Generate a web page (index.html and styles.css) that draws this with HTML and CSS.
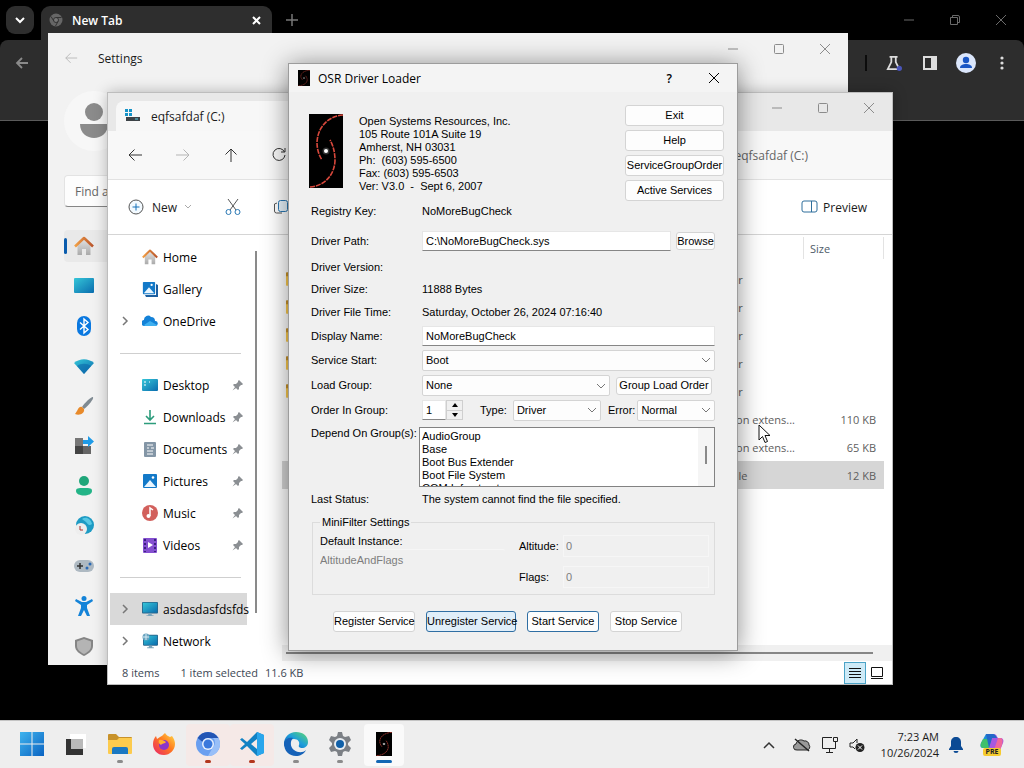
FILE: index.html
```html
<!DOCTYPE html>
<html lang="en">
<head>
    <meta charset="UTF-8">
    <meta name="viewport" content="width=device-width, initial-scale=1.0">
    <title>OSR Driver Loader</title>
    <link rel="stylesheet" href="styles.css">
</head>
<body>
    <!-- shared icons -->
    <svg class="defs" width="0" height="0" aria-hidden="true">
        <defs>
            <linearGradient id="teal" x1="0" y1="0" x2="1" y2="1"><stop offset="0" stop-color="#35c6d8"/><stop offset="1" stop-color="#0a6cae"/></linearGradient>
            <linearGradient id="blue" x1="0" y1="0" x2="1" y2="1"><stop offset="0" stop-color="#3fb4ee"/><stop offset="1" stop-color="#0a63c2"/></linearGradient>
            <linearGradient id="wall" x1="0" y1="0" x2="0" y2="1"><stop offset="0" stop-color="#e2e2e2"/><stop offset="1" stop-color="#aaa"/></linearGradient>
            <linearGradient id="roof" x1="0" y1="0" x2="1" y2="0"><stop offset="0" stop-color="#f2a046"/><stop offset="1" stop-color="#b9552c"/></linearGradient>
            <linearGradient id="fire" x1="1" y1="0" x2="0" y2="1"><stop offset="0" stop-color="#ffe04a"/><stop offset=".45" stop-color="#ff7a1f"/><stop offset="1" stop-color="#e8206c"/></linearGradient>
            <linearGradient id="edge" x1="0" y1="1" x2="1" y2="0"><stop offset="0" stop-color="#0c4fa8"/><stop offset=".5" stop-color="#1d9ddc"/><stop offset="1" stop-color="#5fdc6c"/></linearGradient>
        </defs>
        <symbol id="min" viewBox="0 0 12 12"><path d="M1 6h10" stroke="currentColor" fill="none"/></symbol>
        <symbol id="max" viewBox="0 0 12 12"><rect x="1.500" y="1.500" width="9" height="9" rx="1" stroke="currentColor" fill="none"/></symbol>
        <symbol id="close" viewBox="0 0 12 12"><path d="M1 1l10 10M11 1L1 11" stroke="currentColor" fill="none"/></symbol>
        <symbol id="arrow" viewBox="0 0 16 16"><path d="M15 8H2M7.500 2.500L2 8l5.500 5.500" stroke="currentColor" fill="none"/></symbol>
        <symbol id="chev" viewBox="0 0 8 12"><path d="M2 2l4 4-4 4" stroke="#777" stroke-width="1.500" fill="none"/></symbol>
        <symbol id="pin" viewBox="0 0 12 12"><path d="M7 1l4 4-1 1-1 0-2 2 0 2-1 1L1 6l1-1h2l2-2V2z M3 8L0.500 11.500 4 9z" fill="#8b8f93"/></symbol>
        <symbol id="house" viewBox="0 0 20 20"><path d="M3.500 9L10 3l6.500 6v10H12v-6H8v6H3.500z" fill="url(#wall)"/><path d="M1 10.500L10 2l9 8.500" stroke="url(#roof)" stroke-width="2.600" fill="none" stroke-linejoin="round"/></symbol>
        <symbol id="picture" viewBox="0 0 16 16"><rect x="1" y="1" width="14" height="14" rx="1" fill="#1379c8"/><path d="M2 14l6-7 6 7z" fill="#e9f6ff"/><circle cx="11" cy="4.500" r="1.300" fill="#fff"/></symbol>
        <symbol id="galaxy" viewBox="0 0 34 74" preserveAspectRatio="none"><rect width="34" height="74" fill="#000"/><path d="M34 1C20 2 9 12 8 28c0 8 2 13 5 18" stroke="#d8483c" stroke-width="1.600" stroke-dasharray="5 1" fill="none"/><path d="M1 73c13-1 24-10 25-26 0-9-2-16-5-21" stroke="#d8483c" stroke-width="1.600" stroke-dasharray="5 1" fill="none"/><circle cx="17" cy="37" r="2" fill="#fff"/><circle cx="17" cy="37" r="3.500" fill="#fff" opacity=".2"/></symbol>
        <symbol id="screen" viewBox="0 0 18 18"><rect x="0" y="1" width="18" height="13" rx="1" fill="#28668c"/><rect x="1" y="2" width="16" height="11" fill="url(#teal)"/><path d="M7 14h4v2h2v1H5v-1h2z" fill="#7ba4ba"/></symbol>
        <symbol id="folder" viewBox="0 0 24 22"><path d="M0 2a1 1 0 011-1h7l3 3h12a1 1 0 011 1v15H0z" fill="#c8922a"/><path d="M0 7h9l2-2h13v15a1 1 0 01-1 1H1a1 1 0 01-1-1z" fill="#fccb4e"/></symbol>
    </svg>

    <main class="desktop">
        <section class="browser" aria-label="Browser">
            <div class="tab-strip">
                <button class="tab-search" aria-label="Search tabs"><svg width="12" height="12" viewBox="0 0 12 12"><path d="M2 4l4 4 4-4" stroke="#fff" stroke-width="2" fill="none"/></svg></button>
                <div class="browser-tab">
                    <svg width="14" height="14" viewBox="0 0 14 14"><circle cx="7" cy="7" r="6.500" fill="#666"/><circle cx="7" cy="7" r="2.500" fill="#777" stroke="#333"/><path d="M7 4.500h5.500M4.800 8L2 3.500M9 8.500L6.500 13" stroke="#333"/></svg>
                    <span>New Tab</span>
                    <button aria-label="Close tab"><svg width="9" height="9" viewBox="0 0 9 9"><path d="M1 1l7 7M8 1L1 8" stroke="#fff" stroke-width="2"/></svg></button>
                </div>
                <button class="new-tab" aria-label="New tab"><svg width="12" height="12" viewBox="0 0 12 12"><path d="M6 0v12M0 6h12" stroke="#777" stroke-width="1.500"/></svg></button>
                <div class="caption browser-caption">
                    <button aria-label="Minimize"><svg><use href="#min"/></svg></button>
                    <button aria-label="Restore"><svg viewBox="0 0 12 12"><path d="M1.500 3.500h7v7h-7zM3.500 3V1.500H9a1.500 1.500 0 011.500 1.500v5.500H9" stroke="currentColor" fill="none"/></svg></button>
                    <button aria-label="Close"><svg><use href="#close"/></svg></button>
                </div>
            </div>
            <div class="browser-bar">
                <button aria-label="Back"><svg width="14" height="14" viewBox="0 0 14 14"><path d="M13 7H2M7 2L2 7l5 5" stroke="#8a8a8a" stroke-width="1.800" fill="none"/></svg></button>
                <span class="bar-rule"></span>
                <button aria-label="Labs"><svg width="16" height="16" viewBox="0 0 18 18"><path d="M4 2h9M6 2v6l-4 8h13l-4-8V2" stroke="#ddd" stroke-width="2" fill="none"/><circle cx="15" cy="15" r="3" fill="#4a55b8"/></svg></button>
                <button aria-label="Side panel"><svg width="16" height="16" viewBox="0 0 16 16"><path d="M1 1h14v14H1zM3 3v10h6V3z" fill="#ddd" fill-rule="evenodd"/></svg></button>
                <button aria-label="Profile"><svg width="20" height="20" viewBox="0 0 20 20"><circle cx="10" cy="10" r="10" fill="#dbe6fb"/><circle cx="10" cy="7" r="3.200" fill="#1a56c4"/><path d="M4 15c0-3 3-4 6-4s6 1 6 4z" fill="#1a56c4"/></svg></button>
                <button aria-label="Menu"><svg width="4" height="16" viewBox="0 0 4 16"><circle cx="2" cy="3" r="1.600" fill="#ddd"/><circle cx="2" cy="8" r="1.600" fill="#ddd"/><circle cx="2" cy="13" r="1.600" fill="#ddd"/></svg></button>
            </div>
        </section>

        <section class="settings" aria-label="Settings">
            <header class="settings-head">
                <button class="plain faint" aria-label="Back"><svg width="14" height="14"><use href="#arrow"/></svg></button>
                <h2>Settings</h2>
                <div class="caption">
                    <button aria-label="Minimize"><svg><use href="#min"/></svg></button>
                    <button aria-label="Maximize"><svg><use href="#max"/></svg></button>
                    <button aria-label="Close"><svg><use href="#close"/></svg></button>
                </div>
            </header>
            <div class="avatar"><svg width="60" height="60" viewBox="0 0 60 60"><circle cx="30" cy="30" r="30" fill="#f7f7f7"/><circle cx="30" cy="21" r="9" fill="#8b8b8b"/><path d="M16 33h28c0 9-7 14-14 14s-14-5-14-14z" fill="#8b8b8b"/></svg></div>
            <input class="find" type="text" placeholder="Find a setting" aria-label="Find a setting">
            <nav class="settings-nav">
                <a class="active" href="#" aria-label="Home"><svg viewBox="0 0 20 20"><use href="#house"/></svg></a>
                <a href="#" aria-label="System"><svg viewBox="0 0 20 20"><rect x="0" y="2" width="20" height="15" rx="1" fill="url(#teal)"/></svg></a>
                <a href="#" aria-label="Bluetooth"><svg viewBox="0 0 20 20"><rect x="3" y="0" width="14" height="20" rx="7" fill="#0a78e0"/><path d="M6 6.500l8 7-4 3.500V3l4 3.500-8 7" stroke="#fff" stroke-width="1.400" fill="none"/></svg></a>
                <a href="#" aria-label="Network"><svg viewBox="0 0 20 20"><path d="M0 7c6-5 14-5 20 0l-10 11z" fill="url(#teal)"/><path d="M3 10c4-3 10-3 14 0l-7 8z" fill="#0b62a8" opacity=".55"/></svg></a>
                <a href="#" aria-label="Personalization"><svg viewBox="0 0 20 20"><path d="M19 1c-1-1-8 5-11 10l2 2c5-4 10-10 9-12z" fill="#7f8a92"/><path d="M8 11c-4-1-4 4-7 7 5 2 10-1 9-5z" fill="#e88a2b"/></svg></a>
                <a href="#" aria-label="Apps"><svg viewBox="0 0 20 20"><path d="M1 2h8v8H1z" fill="#777"/><path d="M1 10h8v8H1z" fill="#444"/><path d="M9 10h8v8H9z" fill="#666"/><path d="M9 4h5V0l6 5.500-6 5.500V8H9z" fill="#1e9be8"/></svg></a>
                <a href="#" aria-label="Accounts"><svg viewBox="0 0 20 20"><circle cx="10" cy="5" r="5" fill="#1fa67a"/><path d="M2 15c0-3 2-3 8-3s8 0 8 3c0 6-16 6-16 0z" fill="#23b487"/></svg></a>
                <a href="#" aria-label="Time and language"><svg viewBox="0 0 20 20"><circle cx="11" cy="9" r="9" fill="#1e9bc4"/><path d="M8 3c4-3 9 0 10 5-3 3-5-1-6-2z" fill="#58c8e4"/><circle cx="7" cy="13" r="6" fill="#eee"/><path d="M6 10v4h3" stroke="#a33" fill="none"/></svg></a>
                <a href="#" aria-label="Gaming"><svg viewBox="0 0 20 20"><rect x="0" y="4" width="20" height="12" rx="6" fill="#aeb9c2"/><path d="M6 7v6M3 10h6" stroke="#333" stroke-width="1.500"/><circle cx="13" cy="12" r="1.500" fill="#2b6ab5"/><circle cx="16" cy="8" r="1.500" fill="#2b6ab5"/></svg></a>
                <a href="#" aria-label="Accessibility"><svg viewBox="0 0 20 20"><circle cx="10" cy="2.500" r="2.500" fill="#1483d8"/><path d="M2 3l6 3h4l6-3 1 2-6 4v3l3 8h-3l-3-6-3 6H4l3-8V9L1 5z" fill="#1483d8"/></svg></a>
                <a href="#" aria-label="Privacy"><svg viewBox="0 0 20 20"><path d="M10 1l9 3v6c0 5-5 8-9 10-4-2-9-5-9-10V4z" fill="#858585"/><path d="M10 3l7 2.500V10c0 4-4 6.500-7 8-3-1.500-7-4-7-8V5.500z" fill="#b4b4b4"/></svg></a>
            </nav>
        </section>

        <section class="explorer" aria-label="File Explorer">
            <header class="explorer-head">
                <div class="explorer-tab">
                    <svg width="16" height="16" viewBox="0 0 16 16"><path d="M1 1h3v3H1zM5 1h3v3H5zM1 5h3v3H1zM5 5h3v3H5z" fill="#1593c8"/><path d="M2 9h14v4H2z" fill="#3c4247"/><path d="M11 11h3" stroke="#5bd0e8"/></svg>
                    <span>eqfsafdaf (C:)</span>
                </div>
                <div class="caption">
                    <button aria-label="Minimize"><svg><use href="#min"/></svg></button>
                    <button aria-label="Maximize"><svg><use href="#max"/></svg></button>
                    <button aria-label="Close"><svg><use href="#close"/></svg></button>
                </div>
            </header>
            <div class="explorer-nav">
                <button class="plain" aria-label="Back"><svg width="16" height="16"><use href="#arrow"/></svg></button>
                <button class="plain faint flip" aria-label="Forward"><svg width="16" height="16"><use href="#arrow"/></svg></button>
                <button class="plain up" aria-label="Up"><svg width="16" height="16"><use href="#arrow"/></svg></button>
                <button class="plain" aria-label="Refresh"><svg width="16" height="16" viewBox="0 0 16 16"><path d="M13.500 5A6 6 0 1014 8M14 1v4h-4" stroke="currentColor" fill="none"/></svg></button>
                <span class="crumb">eqfsafdaf (C:)</span>
            </div>
            <div class="explorer-tools">
                <button class="tool new"><svg width="16" height="16" viewBox="0 0 16 16"><circle cx="8" cy="8" r="7" stroke="#555" fill="#f3faff"/><path d="M8 4.500v7M4.500 8h7" stroke="#1470b8"/></svg>New<svg width="6" height="4" viewBox="0 0 6 4"><path d="M0 0l3 3 3-3" stroke="#aaa" fill="none"/></svg></button>
                <button class="tool cut" aria-label="Cut"><svg width="16" height="18" viewBox="0 0 16 18"><path d="M3 1l8 11M13 1L5 12" stroke="#555" fill="none"/><circle cx="3.500" cy="14" r="2.500" stroke="#2a78b4" fill="none"/><circle cx="12.500" cy="14" r="2.500" stroke="#2a78b4" fill="none"/></svg></button>
                <button class="tool" aria-label="Copy"><svg width="16" height="16" viewBox="0 0 16 16"><rect x="5.500" y="1.500" width="9" height="11" rx="2" stroke="#2a78b4" fill="#e8f4fc"/><path d="M4 4L1.500 5v7a2 2 0 002 2H9" stroke="#555" fill="none"/></svg></button>
                <button class="tool preview"><svg width="18" height="14" viewBox="0 0 18 14"><rect x="1" y="1" width="15" height="11" rx="2" stroke="#2f6f9c" fill="none"/><path d="M10.500 1v11" stroke="#2f6f9c"/></svg>Preview</button>
            </div>
            <div class="explorer-body">
                <nav class="tree">
                    <a href="#"><svg><use href="#house"/></svg>Home</a>
                    <a href="#"><svg viewBox="0 0 16 16"><path d="M14 3l2 1v12H4l-1-2h11z" fill="#1c5fa0"/><use href="#picture" width="14" height="14"/></svg>Gallery</a>
                    <a href="#"><svg class="chev"><use href="#chev"/></svg><svg viewBox="0 0 16 16"><path d="M3 13a3 3 0 01-1-6 4 4 0 017-3 4 4 0 014 4 2.500 2.500 0 01.500 5z" fill="#1482d8"/><path d="M2 12l6-4 7 4a2 2 0 01-1.500 1H3z" fill="#3fb0f0"/></svg>OneDrive</a>
                    <hr>
                    <a href="#"><svg viewBox="0 0 16 16"><rect y="2" width="16" height="12" rx="1" fill="url(#teal)"/><path d="M2 5h2M2 8h2M7 5h1" stroke="#fff"/></svg>Desktop<svg class="pin"><use href="#pin"/></svg></a>
                    <a href="#"><svg viewBox="0 0 16 16"><path d="M8 1v10M4 7l4 4 4-4M2 14.500h12" stroke="#2c9c7c" stroke-width="1.600" fill="none"/></svg>Downloads<svg class="pin"><use href="#pin"/></svg></a>
                    <a href="#"><svg viewBox="0 0 16 16"><rect x="2" y="1" width="12" height="15" rx="1" fill="#8496a6"/><path d="M5 4h6M5 7h2M9 7h3M5 10h6M5 13h6" stroke="#fff"/></svg>Documents<svg class="pin"><use href="#pin"/></svg></a>
                    <a href="#"><svg><use href="#picture"/></svg>Pictures<svg class="pin"><use href="#pin"/></svg></a>
                    <a href="#"><svg viewBox="0 0 16 16"><circle cx="8" cy="8" r="8" fill="#d2605c"/><path d="M8 11V3l3 2" stroke="#fff" stroke-width="1.500" fill="none"/><circle cx="6.500" cy="11" r="2" fill="#fff"/></svg>Music<svg class="pin"><use href="#pin"/></svg></a>
                    <a href="#"><svg viewBox="0 0 16 16"><rect x="1" y="1" width="14" height="15" rx="1" fill="#8450d0"/><path d="M3 2v13M13 2v13" stroke="#3c2180" stroke-width="2" stroke-dasharray="2 2"/><path d="M6 5l5 3-5 3z" fill="#fff"/></svg>Videos<svg class="pin"><use href="#pin"/></svg></a>
                    <hr>
                    <a class="selected" href="#"><svg class="chev"><use href="#chev"/></svg><svg><use href="#screen"/></svg>asdasdasfdsfds</a>
                    <a href="#"><svg class="chev"><use href="#chev"/></svg><svg viewBox="0 0 16 16"><use href="#screen" x="1" y="1" width="15" height="15"/><circle cx="4" cy="4" r="3.500" fill="#6aa4c0"/><path d="M1 4h6M4 1v6" stroke="#d6ebf4"/></svg>Network</a>
                </nav>
                <div class="tree-scroll"></div>
                <div class="files">
                    <table>
                        <thead>
                            <tr><th class="icon-col"></th><th class="type-col"></th><th class="size-col"><span>Size</span></th></tr>
                        </thead>
                        <tbody>
                            <tr><td><svg><use href="#folder"/></svg></td><td>File folder</td><td></td></tr>
                            <tr><td><svg><use href="#folder"/></svg></td><td>File folder</td><td></td></tr>
                            <tr><td><svg><use href="#folder"/></svg></td><td>File folder</td><td></td></tr>
                            <tr><td><svg><use href="#folder"/></svg></td><td>File folder</td><td></td></tr>
                            <tr><td><svg><use href="#folder"/></svg></td><td>File folder</td><td></td></tr>
                            <tr><td></td><td>Application extens...</td><td>110 KB</td></tr>
                            <tr><td></td><td>Application extens...</td><td>65 KB</td></tr>
                            <tr class="selected"><td></td><td>System file</td><td>12 KB</td></tr>
                        </tbody>
                    </table>
                    <div class="files-scroll"></div>
                </div>
            </div>
            <footer class="explorer-status">
                <span>8 items</span>
                <span class="picked">1 item selected</span>
                <span>11.6 KB</span>
                <button class="view on" aria-label="Details"><svg width="14" height="14" viewBox="0 0 14 14"><path d="M1 2.500h12M1 5.500h12M1 8.500h12M1 11.500h12" stroke="#111"/></svg></button>
                <button class="view" aria-label="Large icons"><svg width="14" height="14" viewBox="0 0 14 14"><path d="M1.500 1.500h11v9h-11zM1 12.500h12" stroke="#111" fill="none"/></svg></button>
            </footer>
        </section>

        <section class="loader" role="dialog" aria-labelledby="loaderTitle">
            <header class="loader-head">
                <svg width="12" height="16"><use href="#galaxy"/></svg>
                <h1 id="loaderTitle">OSR Driver Loader</h1>
                <button class="plain help">?</button>
                <button class="plain" aria-label="Close"><svg width="12" height="12"><use href="#close"/></svg></button>
            </header>
            <form class="loader-body">
                <div class="about">
                    <svg class="logo" width="34" height="74"><use href="#galaxy"/></svg>
                    <address>
                        Open Systems Resources, Inc.<br>
                        105 Route 101A Suite 19<br>
                        Amherst, NH 03031<br>
                        Ph:&nbsp; (603) 595-6500<br>
                        Fax: (603) 595-6503<br>
                        Ver: V3.0&nbsp; -&nbsp; Sept 6, 2007
                    </address>
                    <div class="side-buttons">
                        <button type="button">Exit</button>
                        <button type="button">Help</button>
                        <button type="button">ServiceGroupOrder</button>
                        <button type="button">Active Services</button>
                    </div>
                </div>

                <div class="row first"><span class="name">Registry Key:</span><span>NoMoreBugCheck</span></div>
                <div class="row path">
                    <label class="name" for="path">Driver Path:</label>
                    <input class="grow" id="path" type="text" value="C:\NoMoreBugCheck.sys">
                    <button class="browse" type="button">Browse</button>
                </div>
                <div class="row short"><span class="name">Driver Version:</span></div>
                <div class="row short"><span class="name">Driver Size:</span><span>11888 Bytes</span></div>
                <div class="row"><span class="name">Driver File Time:</span><span>Saturday, October 26, 2024 07:16:40</span></div>
                <div class="row">
                    <label class="name" for="display">Display Name:</label>
                    <input class="grow" id="display" type="text" value="NoMoreBugCheck">
                </div>
                <div class="row">
                    <label class="name" for="start">Service Start:</label>
                    <select class="grow" id="start"><option>Boot</option></select>
                </div>
                <div class="row wide">
                    <label class="name" for="group">Load Group:</label>
                    <select class="grow" id="group"><option>None</option></select>
                    <button class="order" type="button">Group Load Order</button>
                </div>
                <div class="row short">
                    <label class="name" for="order">Order In Group:</label>
                    <div class="spinner">
                        <input id="order" type="number" value="1">
                        <div class="spin">
                            <button type="button" aria-label="Increase"><svg width="6" height="4" viewBox="0 0 6 4"><path d="M0 4l3-4 3 4z"/></svg></button>
                            <button type="button" aria-label="Decrease"><svg width="6" height="4" viewBox="0 0 6 4"><path d="M0 0l3 4 3-4z"/></svg></button>
                        </div>
                    </div>
                    <label class="type-label" for="type">Type:</label>
                    <select class="type" id="type"><option>Driver</option></select>
                    <label class="error-label" for="error">Error:</label>
                    <select class="grow" id="error"><option>Normal</option></select>
                </div>
                <div class="row depend">
                    <label class="name" for="depend">Depend On Group(s):</label>
                    <div class="list">
                        <select id="depend" size="5" multiple>
                            <option>AudioGroup</option>
                            <option>Base</option>
                            <option>Boot Bus Extender</option>
                            <option>Boot File System</option>
                            <option>COM Infrastructure</option>
                        </select>
                        <div class="list-scroll"></div>
                    </div>
                </div>
                <div class="row"><span class="name">Last Status:</span><output>The system cannot find the file specified.</output></div>

                <fieldset>
                    <legend>MiniFilter Settings</legend>
                    <div class="instance">
                        <label for="instance">Default Instance:</label>
                        <select id="instance" disabled><option>AltitudeAndFlags</option></select>
                    </div>
                    <div class="filter">
                        <label for="altitude">Altitude:</label>
                        <input id="altitude" type="text" value="0" disabled>
                        <label for="flags">Flags:</label>
                        <input id="flags" type="text" value="0" disabled>
                    </div>
                </fieldset>

                <div class="actions">
                    <button type="button">Register Service</button>
                    <button class="hot" type="button">Unregister Service</button>
                    <button class="default" type="button">Start Service</button>
                    <button type="button">Stop Service</button>
                </div>
            </form>
        </section>

        <svg class="cursor" width="13" height="20" viewBox="0 0 13 20"><path d="M1 1v15l3.500-3.500L7 18.500l2.500-1L7 11.500h5z" fill="#fff" stroke="#111"/></svg>
    </main>

    <footer class="taskbar">
        <div class="apps">
            <button aria-label="Start"><svg viewBox="0 0 24 24"><path d="M0 0h11.500v11.500H0zM12.500 0H24v11.500H12.500zM0 12.500h11.500V24H0zM12.500 12.500H24V24H12.500z" fill="url(#blue)"/></svg></button>
            <button aria-label="Task view"><svg viewBox="0 0 24 24"><path d="M6 2h16v14H6z" fill="#fff"/><path d="M2 7h17v16H2z" fill="#333"/><path d="M7 7h12v10H7z" fill="#b9b9b9"/></svg></button>
            <button class="open" aria-label="File Explorer"><svg viewBox="0 0 24 24"><use href="#folder" width="24" height="22" y="1"/><path d="M4 22v-5a2 2 0 012-2h12a2 2 0 012 2v5z" fill="#1a78c2"/></svg></button>
            <button aria-label="Firefox"><svg viewBox="0 0 24 24"><path d="M12 23C5 23 1 18 1 12c0-3 1-6 3-8l1 3 3-2c2-1 3-2 5-4 1 2 3 3 5 4l2-1c2 3 3 5 3 8 0 6-5 11-11 11z" fill="url(#fire)"/><circle cx="12" cy="13" r="5" fill="#8a35c8"/><path d="M7 8c3-1 5 1 7 2-1 2-4 1-5 3-2-1-3-3-2-5z" fill="#ffb02e"/></svg></button>
            <button class="open alert" aria-label="Chromium"><svg viewBox="0 0 24 24"><circle cx="12" cy="12" r="12" fill="#6a9ff0"/><path d="M12 0a12 12 0 0110.400 6H12a6 6 0 00-5.500 4L1.600 6A12 12 0 0112 0z" fill="#2456b4"/><path d="M12 24a12 12 0 0010.400-18H17a6 6 0 010 9z" fill="#98bff8"/><circle cx="12" cy="12" r="6" fill="#e8f0fd"/><circle cx="12" cy="12" r="4.500" fill="#3a78dc"/></svg></button>
            <button class="open alert" aria-label="Code"><svg viewBox="0 0 24 24"><path d="M17 0l7 3v18l-7 3L7 14l-5 4-2-1.500L5 12 0 7.500 2 6l5 4zm0 7l-6 5 6 5z" fill="#1282c4" fill-rule="evenodd"/><path d="M17 0l7 3v18l-7 3z" fill="#2aa6ec"/></svg></button>
            <button class="open" aria-label="Edge"><svg viewBox="0 0 24 24"><path d="M0 12C0 5 5 0 12 0s12 4 12 10c0 4-3 6-6 6-2 0-4-1-3-3 1-3-1-6-5-6-5 0-8 4-7 9-2-1-3-2-3-4z" fill="url(#edge)"/><path d="M0 11c1-4 5-6 9-5-3 3-3 9 1 12 4 3 9 3 12 0-2 4-6 6-10 6C5 24 0 19 0 11z" fill="#1562b8"/></svg></button>
            <button class="open" aria-label="Settings"><svg viewBox="0 0 24 24"><path d="M10 0h4l1 4 2 1 4-1 2 4-3 3v2l3 3-2 4-4-1-2 1-1 4h-4l-1-4-2-1-4 1-2-4 3-3v-2L1 8l2-4 4 1 2-1z" fill="#7c8085"/><circle cx="12" cy="12" r="6" fill="#e9eef2"/><circle cx="12" cy="12" r="4" fill="#1060a8"/></svg></button>
            <button class="open active" aria-label="OSR Driver Loader"><svg viewBox="0 0 24 24"><use href="#galaxy" x="4" width="16" height="24"/></svg></button>
        </div>
        <div class="tray">
            <button aria-label="Hidden icons"><svg width="12" height="8" viewBox="0 0 12 8"><path d="M1 7l5-5 5 5" stroke="#333" stroke-width="1.500" fill="none"/></svg></button>
            <button aria-label="OneDrive"><svg width="18" height="16" viewBox="0 0 18 16"><path d="M4 13a3 3 0 01-1-6 5 5 0 018-3 4 4 0 015 4 3 3 0 01-2 5z" stroke="#222" fill="#999"/><path d="M2 2l14 12" stroke="#222" stroke-width="1.500"/></svg></button>
            <button aria-label="Network"><svg width="18" height="18" viewBox="0 0 18 18"><path d="M11 1.500H1.500v11h13V9M5 16.500h7M8.500 13v3M12.500 1.500h4v4h-4zM14.500 6v6" stroke="#222" fill="none"/></svg></button>
            <button aria-label="Volume"><svg width="16" height="16" viewBox="0 0 16 16"><path d="M1 6h3l4-4v4M1 6v4h3l2 2" stroke="#222" fill="none"/><circle cx="11" cy="10.500" r="4.500" fill="#222"/><path d="M9 8.500l4 4M13 8.500l-4 4" stroke="#fff"/></svg></button>
            <button class="clock">7:23 AM<br>10/26/2024</button>
            <button aria-label="Notifications"><svg width="14" height="16" viewBox="0 0 14 16"><path d="M7 0c3 0 5 2 5 5v4l2 3v1H0v-1l2-3V5c0-3 2-5 5-5zM4.500 14h5a2.500 2 0 01-5 0z" fill="#0b4a94"/></svg></button>
            <button class="copilot" aria-label="Copilot">
                <svg width="24" height="20" viewBox="0 0 24 20"><path d="M6 1h8l-4 14H4c-4 0-4-2-3-5z" fill="#1d8fd8"/><path d="M1 10l2-4h8l-2 9H4c-3 0-4-2-3-5z" fill="#3fc06c"/><path d="M14 1c3 0 3 4 4 4h2c3 0 4 2 3 5l-3 7H8l4-12z" fill="#a858e0"/><path d="M18 5h3c3 1 1 8-1 12h-6z" fill="#f0689c"/><path d="M6 1h7c3 0 3 4 5 4h-6L9 15z" fill="#2468c8"/></svg>
                <span class="pre">PRE</span>
            </button>
        </div>
    </footer>
</body>
</html>
```
FILE: styles.css
```css
* {
    box-sizing: border-box;
}
body {
    margin: 0;
    height: 100vh;
    display: flex;
    flex-direction: column;
    overflow: hidden;
    background-color: #000;
    font-family: "Open Sans", "Noto Sans", sans-serif;
    font-size: 12px;
    color: #1b1b1b;
}
button {
    font: inherit;
    color: inherit;
    margin: 0;
    padding: 0;
    border: none;
    background: none;
}
svg {
    display: block;
    flex: none;
}
h1, h2 {
    margin: 0;
    font-size: 12px;
    font-weight: 400;
}
a {
    color: inherit;
    text-decoration: none;
}
.defs {
    position: absolute;
}
.desktop {
    position: relative;
    flex: 1;
    overflow: hidden;
}
.caption {
    display: flex;
    margin-left: auto;
    color: #8c8c8c;
}
.caption button {
    display: grid;
    place-items: center;
    width: 46px;
}
.caption svg {
    width: 12px;
    height: 12px;
}
.plain {
    display: grid;
    place-items: center;
}
.faint {
    color: #b5b5b5;
}

/* browser */
.browser {
    border-bottom: 1px solid #5a5a5a;
}
.tab-strip {
    display: flex;
    height: 40px;
    padding-left: 6px;
    align-items: flex-start;
}
.tab-search {
    display: grid;
    place-items: center;
    width: 28px;
    height: 28px;
    margin-top: 6px;
    border-radius: 9px;
    background-color: #2e2e2e;
}
.browser-tab {
    display: flex;
    align-items: center;
    gap: 9px;
    width: 231px;
    height: 34px;
    margin: 6px 14px 0 7px;
    padding: 0 11px 6px 8px;
    border-radius: 9px 9px 0 0;
    background-color: #2e2e2e;
    color: #fff;
    font-weight: 600;
}
.browser-tab button {
    margin-left: auto;
}
.new-tab {
    margin-top: 14px;
}
.browser-caption {
    height: 40px;
    color: #6b6b6b;
}
.browser-bar {
    display: flex;
    height: 80px;
    padding: 0 4px 34px;
    align-items: center;
    border-radius: 8px 8px 0 0;
    background-color: #2d2d2d;
}
.browser-bar button {
    display: grid;
    place-items: center;
    width: 36px;
}
.bar-rule {
    width: 2px;
    height: 16px;
    margin: 0 9px 0 auto;
    background-color: #0c0c0c;
}

/* settings */
.settings {
    position: absolute;
    left: 48px;
    top: 33px;
    width: 800px;
    height: 632px;
    background-color: #f2f2f2;
}
.settings-head {
    display: flex;
    height: 50px;
    padding-left: 16px;
}
.settings-head h2 {
    margin-left: 20px;
    align-self: center;
}
.settings-head .caption {
    height: 32px;
}
.avatar {
    padding: 8px 0 0 16px;
}
.find {
    display: block;
    width: 260px;
    height: 32px;
    margin: 24px 0 23px 16px;
    padding: 0 10px;
    border: 1px solid #e3e3e3;
    border-bottom-color: #868686;
    border-radius: 4px;
    background-color: #fdfdfd;
    font: inherit;
}
.find::placeholder {
    color: #666;
}
.settings-nav {
    display: flex;
    flex-direction: column;
    gap: 8px;
    width: 272px;
    padding-left: 16px;
}
.settings-nav a {
    display: flex;
    align-items: center;
    height: 32px;
    padding-left: 10px;
    border-radius: 4px;
}
.settings-nav svg {
    width: 20px;
    height: 20px;
}
.settings-nav .active {
    padding-left: 0;
    background-color: #e9e9e9;
}
.settings-nav .active::before {
    content: "";
    width: 3px;
    height: 16px;
    margin-right: 7px;
    border-radius: 2px;
    background-color: #0a5cad;
}

/* explorer */
.explorer {
    position: absolute;
    left: 108px;
    top: 93px;
    width: 784px;
    height: 591px;
    display: flex;
    flex-direction: column;
    background-color: #fff;
    box-shadow: 0 0 0 1px #bdbdbd, 0 0 14px rgba(0, 0, 0, 0.3);
}
.explorer-head {
    display: flex;
    height: 38px;
    padding: 8px 0 0 8px;
    background-color: #e8e8e8;
}
.explorer-tab {
    display: flex;
    align-items: center;
    gap: 11px;
    width: 240px;
    padding: 0 8px;
    border-radius: 8px 8px 0 0;
    background-color: #f7f7f7;
    font-weight: 500;
}
.explorer-head .caption {
    height: 14px;
}
.explorer-nav {
    display: flex;
    align-items: center;
    gap: 32px;
    height: 49px;
    padding: 0 84px 0 19px;
    border-bottom: 1px solid #e2e2e2;
    background-color: #f8f8f8;
    color: #333;
}
.flip svg {
    transform: rotate(180deg);
}
.up svg {
    transform: rotate(90deg);
}
.crumb {
    margin-left: auto;
    color: #666;
}
.explorer-tools {
    display: flex;
    align-items: center;
    gap: 32px;
    height: 55px;
    padding: 0 25px 0 20px;
    border-bottom: 1px solid #d5d5d5;
}
.tool {
    display: flex;
    align-items: center;
    gap: 8px;
}
.new {
    padding-right: 2px;
}
.preview {
    gap: 4px;
    margin-left: auto;
}
.explorer-body {
    display: flex;
    flex: 1;
    min-height: 0;
}
.tree {
    width: 139px;
    padding-top: 6px;
    color: #000;
}
.tree a {
    display: flex;
    align-items: center;
    gap: 5px;
    height: 32px;
    margin-left: 2px;
    padding-left: 32px;
}
.tree svg {
    width: 16px;
    height: 16px;
}
.tree .chev {
    width: 8px;
    height: 12px;
    margin: 0 8px 0 -21px;
}
.tree .pin {
    width: 12px;
    height: 12px;
    margin: 0 3px 0 auto;
}
.tree .selected {
    background-color: #d9d9d9;
}
.tree hr {
    height: 1px;
    margin: 16px 6px 15px 12px;
    border: none;
    background-color: #cfcfcf;
}
.tree-scroll {
    width: 2px;
    margin: 16px 25px 48px 8px;
    background-color: #8a8a8a;
}
.files {
    flex: 1;
    display: flex;
    flex-direction: column;
    justify-content: space-between;
}
.files table {
    width: 602px;
    border-collapse: collapse;
    table-layout: fixed;
    color: #5e5e5e;
    font-size: 11px;
}
.files th {
    height: 30px;
    padding: 0 0 4px;
    font-weight: 400;
    text-align: left;
    color: #4e5b68;
}
.files th span {
    display: block;
    padding: 4px 6px 3px;
    border-left: 1px solid #e3e3e3;
    border-right: 1px solid #e3e3e3;
}
.files td {
    height: 28px;
    padding: 0;
    white-space: nowrap;
}
.files td:first-child {
    padding-left: 4px;
}
.files td:last-child {
    padding-right: 8px;
    text-align: right;
}
.files td svg {
    width: 16px;
    height: 16px;
}
.files .icon-col {
    width: 410px;
}
.files .size-col {
    width: 81px;
}
.files .selected {
    background-color: #d6d6d6;
}
.files-scroll {
    height: 16px;
    padding: 7px 19px 7px 4px;
    background-color: #f0f0f0;
}
.files-scroll::before {
    content: "";
    display: block;
    height: 2px;
    background-color: #868686;
}
.explorer-status {
    display: flex;
    align-items: center;
    height: 23px;
    padding: 0 4px 0 14px;
    color: #3d4754;
    font-size: 11px;
}
.picked {
    margin: 0 7px 0 21px;
}
.view {
    display: grid;
    place-items: center;
    width: 22px;
    height: 22px;
}
.on {
    margin-left: auto;
    border: 1px solid #4ba3c7;
    background-color: #cdeaf7;
}

/* driver loader */
.loader {
    position: absolute;
    left: 288px;
    top: 63px;
    width: 450px;
    border: 1px solid #9c9c9c;
    background-color: #f0f0f0;
    box-shadow: 0 2px 24px rgba(0, 0, 0, 0.45);
    color: #000;
}
.loader-head {
    display: flex;
    align-items: center;
    height: 28px;
    padding: 0 17px 0 9px;
    background-color: #f4f4f4;
}
.loader-head h1 {
    margin-left: 8px;
}
.help {
    margin: 0 36px 0 auto;
    font-weight: 600;
}
.loader-body {
    padding: 13px 22px 18px;
    font-family: "Liberation Sans", Arial, sans-serif;
    font-size: 11px;
    line-height: 13px;
}
.loader-body button {
    height: 21px;
    border: 1px solid #d4d4d4;
    border-radius: 3px;
    background-color: #fdfdfd;
    white-space: nowrap;
}
.loader-body input, .loader-body select {
    min-width: 0;
    height: 20px;
    margin: 0;
    padding: 0 3px;
    border: 1px solid #e6e6e6;
    border-radius: 0;
    background-color: #fff;
    font: inherit;
    color: inherit;
    appearance: none;
}
.loader-body input {
    border-bottom-color: #868686;
}
.loader-body select {
    height: 21px;
    border-color: #d4d4d4;
    border-radius: 2px;
    background: #fdfdfd url("data:image/svg+xml,%3Csvg xmlns='http://www.w3.org/2000/svg' width='10' height='6'%3E%3Cpath d='M1 1l4 4 4-4' stroke='%23777' fill='none'/%3E%3C/svg%3E") no-repeat right 3px center;
}
.about {
    display: flex;
    gap: 16px;
    height: 99px;
}
.logo {
    margin: 9px 0 0 -2px;
}
address {
    margin-top: 10px;
    font-style: normal;
}
.side-buttons {
    display: flex;
    flex-direction: column;
    gap: 4px;
    width: 99px;
    margin: 0 -9px 0 auto;
}
.row {
    display: flex;
    align-items: center;
    height: 24px;
}
.first {
    height: 14px;
}
.short {
    height: 22px;
}
.path {
    height: 20px;
    margin: 13px 0 5px;
}
.wide {
    height: 27px;
}
.name {
    width: 111px;
}
.grow {
    flex: 1;
}
.loader-body .browse {
    width: 39px;
    height: 18px;
    margin-left: 5px;
}
.loader-body .order {
    width: 96px;
    height: 18px;
    margin: 0 3px 0 6px;
}
.spinner {
    display: flex;
    width: 41px;
    height: 20px;
}
.loader-body .spinner input {
    width: 24px;
    appearance: textfield;
}
.spinner input::-webkit-inner-spin-button {
    appearance: none;
    margin: 0;
}
.spin {
    display: flex;
    flex-direction: column;
    width: 17px;
    border: 1px solid #cfcfcf;
}
.loader-body .spin button {
    display: grid;
    place-items: center;
    flex: 1;
    height: 9px;
    border: none;
    border-radius: 0;
    background-color: #f0f0f0;
}
.loader-body .spin button + button {
    border-top: 1px solid #cfcfcf;
}
.type-label {
    margin: 0 6px 0 17px;
}
.loader-body .type {
    width: 88px;
}
.error-label {
    margin: 0 2px 0 7px;
}
.depend {
    height: 66px;
    padding: 6px 0 0;
    align-items: flex-start;
}
.depend .name {
    width: 108px;
    white-space: nowrap;
}
.list {
    flex: 1;
    display: flex;
    height: 60px;
    border: 1px solid #828282;
    background-color: #fff;
}
.loader-body .list select {
    flex: 1;
    height: 58px;
    padding: 2px 0 0;
    border: none;
    background: none;
    overflow: hidden;
    scrollbar-width: none;
}
.list option {
    min-height: 13px;
    padding: 0 2px;
    line-height: 13px;
}
.list-scroll {
    width: 16px;
    padding: 18px 7px;
    background-color: #f5f5f5;
}
.list-scroll::before {
    content: "";
    display: block;
    width: 2px;
    height: 18px;
    background-color: #8a8a8a;
}
fieldset {
    display: flex;
    gap: 14px;
    margin: 5px 0 16px 1px;
    padding: 6px 5px 6px 7px;
    border: 1px solid #dcdcdc;
}
legend {
    padding: 0 2px;
}
.instance {
    display: flex;
    flex-direction: column;
    gap: 1px;
    width: 185px;
}
.filter {
    display: grid;
    grid-template-columns: 44px 1fr;
    row-gap: 9px;
    flex: 1;
    align-items: center;
}
.loader-body :disabled {
    padding: 0 2px;
    border-color: #f6f6f6;
    background: none;
    color: #7d7d7d;
    opacity: 1;
}
.loader-body .instance select {
    padding: 0;
    border-width: 1px 0 0;
}
.loader-body .filter input {
    height: 22px;
}
.actions {
    display: flex;
    gap: 11px;
    padding-left: 22px;
}
.actions button {
    width: 72px;
}
.actions button:first-child {
    width: 82px;
}
.loader-body .hot {
    width: 90px;
    border-color: #2f6ea3;
    background-color: #e0eef9;
}
.loader-body .default {
    border-color: #2f6ea3;
}
.cursor {
    position: absolute;
    left: 758px;
    top: 424px;
}

/* taskbar */
.taskbar {
    display: flex;
    justify-content: space-between;
    height: 48px;
    padding: 0 20px 0 10px;
    border-top: 1px solid #c4c4c4;
    background-color: #eee;
}
.apps {
    display: flex;
    align-items: center;
}
.apps button {
    display: flex;
    flex-direction: column;
    align-items: center;
    width: 44px;
    height: 42px;
    padding-top: 8px;
    border-radius: 4px;
}
.apps svg {
    width: 24px;
    height: 24px;
}
.open::after {
    content: "";
    width: 6px;
    height: 3px;
    margin-top: 4px;
    border-radius: 2px;
    background-color: #8b8b8b;
}
.apps .alert {
    background-color: #f5e9e7;
}
.alert::after {
    background-color: #b3361c;
}
.apps .active {
    width: 40px;
    margin-left: 2px;
    background-color: #fafafa;
}
.apps .active::after {
    width: 16px;
    background-color: #1267b4;
}
.tray {
    display: flex;
    align-items: center;
    gap: 10px;
}
.tray button:first-child {
    margin-right: 8px;
}
.clock {
    margin-left: 6px;
    text-align: right;
    font-size: 11px;
    line-height: 16px;
}
.copilot {
    display: flex;
    flex-direction: column;
    align-items: center;
    margin-left: 7px;
}
.pre {
    margin-top: -5px;
    padding: 0 3px;
    border-radius: 2px;
    background-color: #f6cb2f;
    font-size: 7px;
    font-weight: 700;
    line-height: 8px;
    color: #222;
}
```
